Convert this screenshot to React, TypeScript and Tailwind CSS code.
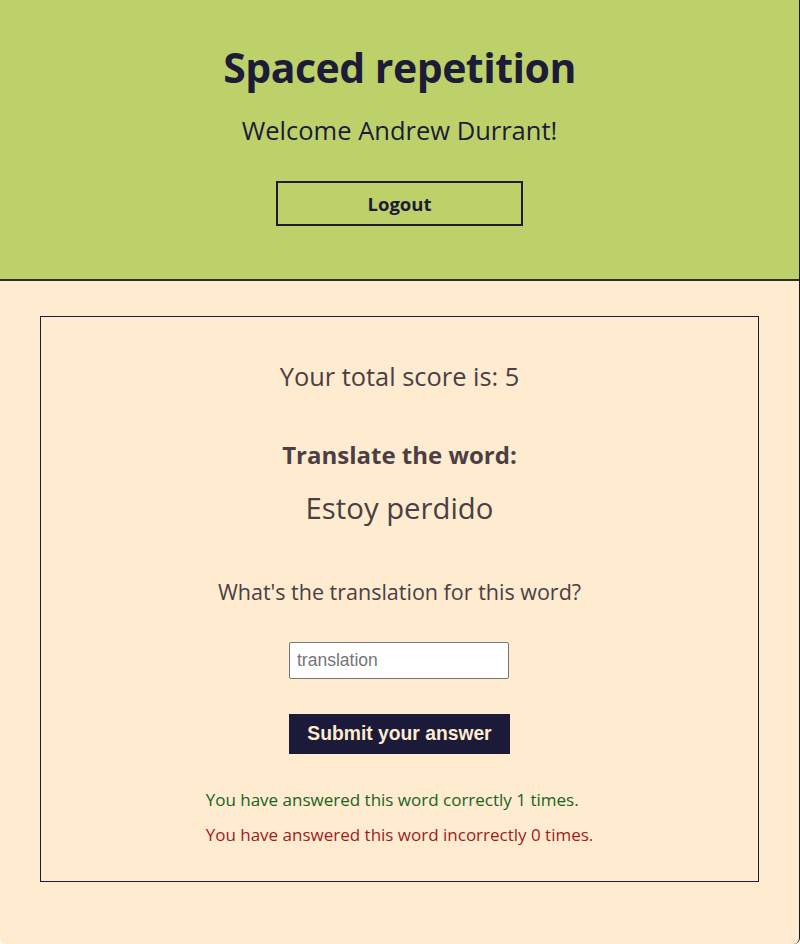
import React from "react";

export default function App() {
  return (
    <div className="min-h-[944px] w-[800px] bg-[#ffebd0] border-r border-[#1a1a1a] rounded-b-[6px] flex flex-col" style={{ fontFamily: "'Open Sans', Lato, sans-serif" }}>
      <header className="h-[281px] bg-[#bdd16b] border-b-2 border-[#2e2e2e] flex flex-col items-center text-[#1c1b38]">
        <h1 className="mt-[40px] text-[41px] leading-[54px] font-bold tracking-[-0.5px]">Spaced repetition</h1>
        <p className="mt-[21px] text-[25.5px] leading-[30px]">Welcome Andrew Durrant!</p>
        <button className="mt-[36px] w-[247px] h-[45px] border-2 border-[#1c1b38] text-[18.5px] font-bold">Logout</button>
      </header>
      <main className="flex-1 px-[40px] pt-[35px] pb-[62px]">
        <section className="h-[566px] border border-[#1c1b38] flex flex-col items-center text-[#4a3f44]">
          <p className="mt-[44px] text-[25.4px] leading-[30px]">Your total score is: 5</p>
          <h2 className="mt-[49px] text-[24px] leading-[30px] font-bold">Translate the word:</h2>
          <p className="mt-[21px] text-[29.3px] leading-[34px]">Estoy perdido</p>
          <p className="mt-[54px] text-[21.5px] leading-[26px]">What's the translation for this word?</p>
          <div className="mt-[37px] w-[221px] flex">
            <input
              placeholder="translation"
              className="w-[220px] h-[37px] bg-white border border-[#767676] rounded-[2px] px-[7px] text-[17.5px] text-black placeholder:text-[#757575] outline-none"
              style={{ fontFamily: "'Liberation Sans', Arial, sans-serif" }}
            />
          </div>
          <button
            className="mt-[35px] w-[221px] h-[40px] bg-[#1b1a38] text-[#ffebd0] text-[19.3px] font-bold"
            style={{ fontFamily: "'Liberation Sans', Arial, sans-serif" }}
          >
            Submit your answer
          </button>
          <div className="mt-[36px] flex flex-col items-start gap-[15px] text-[17px] leading-[20px]">
            <p className="text-[#18631d]">You have answered this word correctly 1 times.</p>
            <p className="text-[#a01b1b]">You have answered this word incorrectly 0 times.</p>
          </div>
        </section>
      </main>
    </div>
  );
}
